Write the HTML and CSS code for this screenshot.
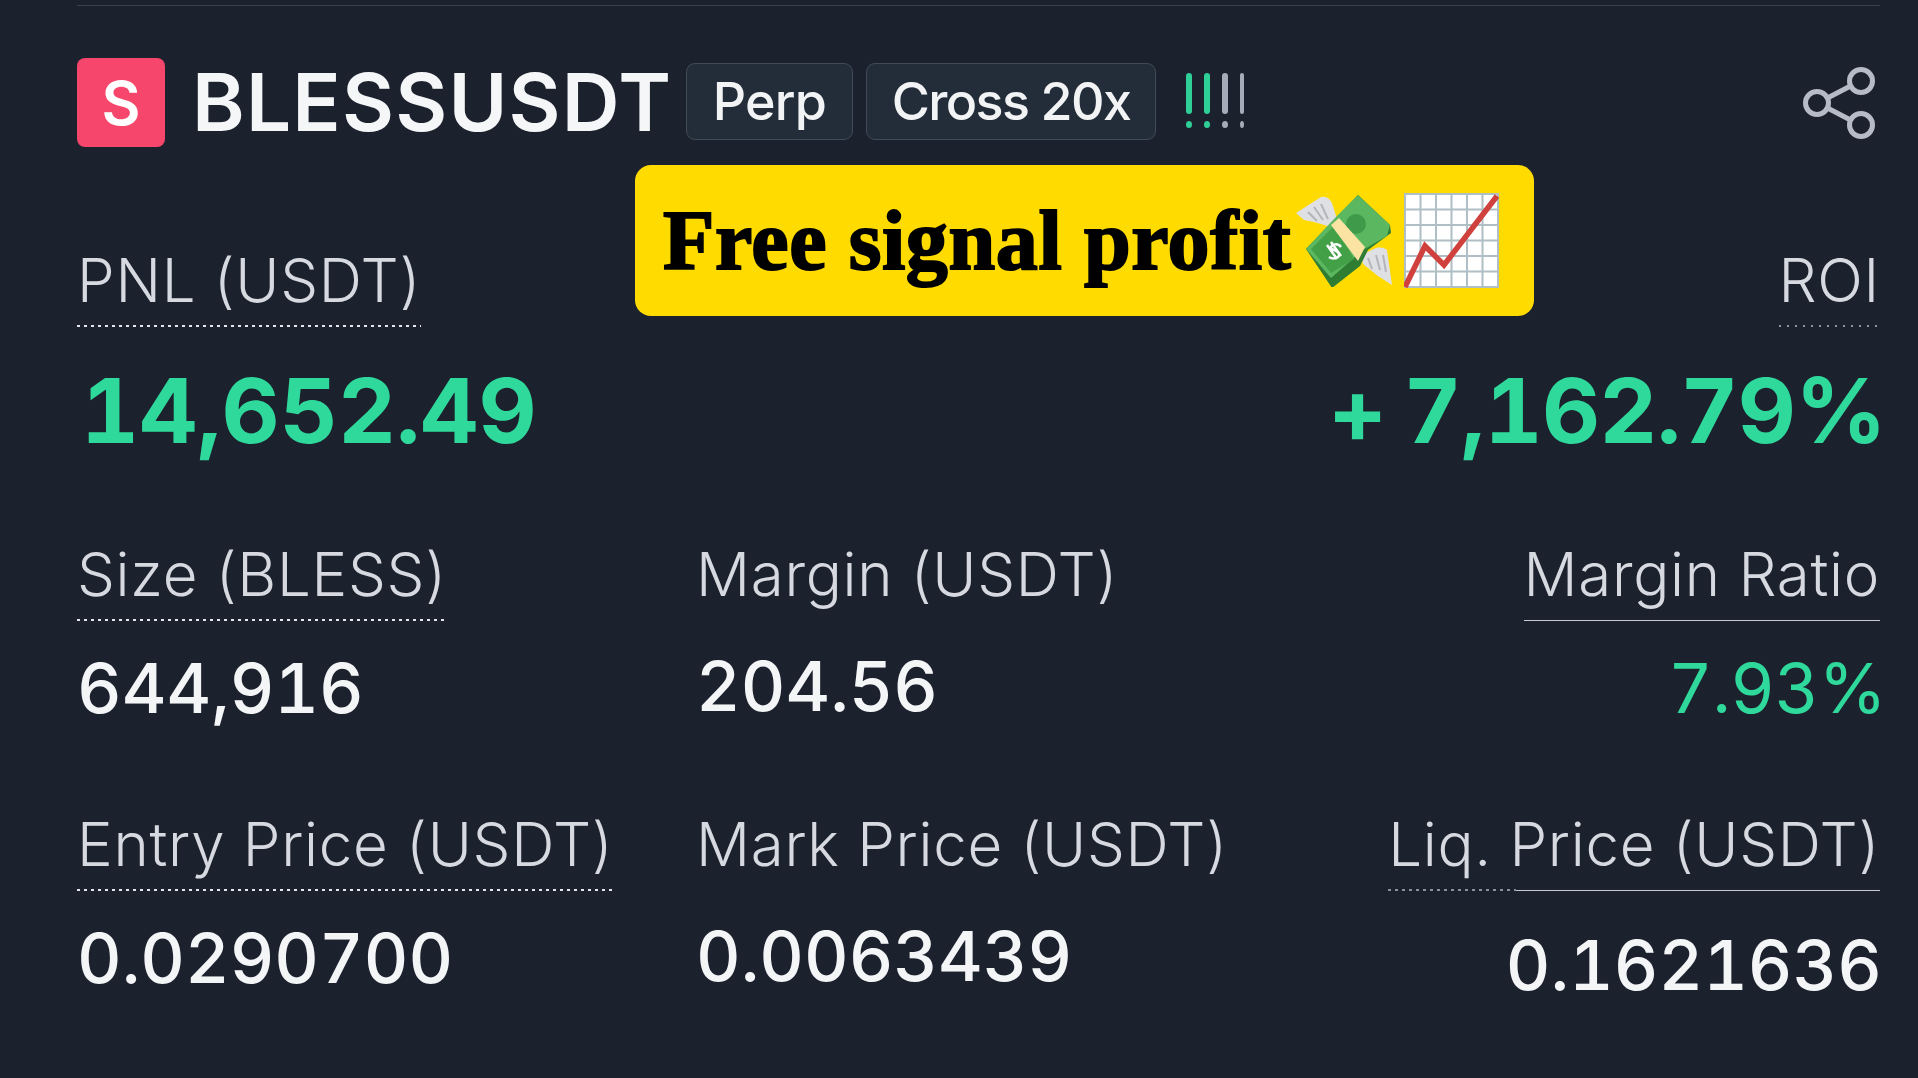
FILE: index.html
```html
<!DOCTYPE html>
<html lang="en">
<head>
<meta charset="utf-8">
<title>BLESSUSDT</title>
<link rel="stylesheet" href="styles.css">
</head>
<body>
<main class="card">
  <div class="topline"></div>
  <header class="head">
    <div class="logo">S</div>
    <h1 class="symbol">BLESSUSDT</h1>
    <span class="tag tag-perp">Perp</span>
    <span class="tag tag-cross">Cross 20x</span>
    <div class="risk">
      <i class="bar on"></i><i class="bar on"></i><i class="bar"></i><i class="bar thin"></i>
    </div>
    <svg class="share" viewBox="0 0 72 72" fill="none" stroke="#b6bbc7" stroke-width="5">
      <circle cx="58" cy="14" r="11.5"/>
      <circle cx="14" cy="36" r="11.5"/>
      <circle cx="58" cy="58" r="11.5"/>
      <path d="M24.500 31 47.500 19M24.500 41 47.500 53"/>
    </svg>
  </header>

  <section class="stats">
    <div class="stat s-top">
      <span class="label dots">PNL (USDT)</span>
      <div class="value big inset">14,652.49</div>
    </div>
    <div class="stat s-top empty"></div>
    <div class="stat s-top end">
      <span class="label tiny">ROI</span>
      <div class="value big pct">+ 7,162.79%</div>
    </div>

    <div class="stat">
      <span class="label dots">Size (BLESS)</span>
      <div class="value">644,916</div>
    </div>
    <div class="stat">
      <span class="label">Margin (USDT)</span>
      <div class="value up-2">204.56</div>
    </div>
    <div class="stat end">
      <span class="label solid">Margin Ratio</span>
      <div class="value green pct">7.93%</div>
    </div>

    <div class="stat">
      <span class="label dots">Entry Price (USDT)</span>
      <div class="value">0.0290700</div>
    </div>
    <div class="stat">
      <span class="label">Mark Price (USDT)</span>
      <div class="value up-2">0.0063439</div>
    </div>
    <div class="stat end">
      <span class="label mixed">Liq. Price (USDT)</span>
      <div class="value down-7">0.1621636</div>
    </div>
  </section>

  <aside class="banner">
    <span class="banner-text">Free signal profit</span>
    <svg class="emoji-money" viewBox="0 0 96 92">
      <path d="M0 18 25 2c5-1 9 2 11 6l5 16-6 8-17-5L8 25Z" fill="#dfe0e3"/>
      <path d="M12 17l9 9M18 12l9 13M25 9l7 15" stroke="#b3b5ba" stroke-width="2" fill="none"/>
      <path d="M65 60 80 53c5-1 9 0 11 2l5 35-14-9-15-12Z" fill="#dfe0e3"/>
      <path d="M72 63l4 11M80 60l4 15M87 60l3 17" stroke="#b3b5ba" stroke-width="2" fill="none"/>
      <path d="M10 54 36 93 64 71 72 55 95 38 94 30 62 0Z" fill="#2e7d32"/>
      <path d="M10 54 38 24 62 0 94 30 91 41 67 55 35 83Z" fill="#5cb860"/>
      <path d="M15 54 39 30 58 64 35 78Z" fill="#43a047"/>
      <circle cx="60" cy="29" r="10" fill="#3f9a4a"/>
      <path d="M35 30 43 23 69 52 62 66Z" fill="#fbe3a4"/>
      <path d="M45 52c-3-4-9-3-10 0s7 3 8 7-6 6-10 3M31 50l10 14M35 47l10 14" stroke="#fff" stroke-width="2.500" fill="none"/>
    </svg>
    <svg class="emoji-chart" viewBox="0 0 95 95">
      <rect x="1" y="1" width="93" height="93" fill="#fff" stroke="#b0bec5" stroke-width="2"/>
      <path d="M16.500 1V94M32 1V94M47.500 1V94M63 1V94M78.500 1V94M1 16.500H94M1 32H94M1 47.500H94M1 63H94M1 78.500H94" stroke="#b0bec5" stroke-width="2"/>
      <path d="M1 94 21 53 40 72 93 3" stroke="#d0403c" stroke-width="5.500" fill="none"/>
    </svg>
  </aside>
</main>
</body>
</html>
```

FILE: styles.css
```css
* { box-sizing: border-box; }
html, body { margin: 0; height: 100%; }
body {
  background: #1c212e;
  color: #fff;
  font-family: Inter, "Liberation Sans", sans-serif;
  overflow: hidden;
}
.card { position: relative; height: 1078px; padding: 5px 38px 0 77px; }
.topline { height: 1px; background: #3a404c; }

.head { display: flex; align-items: flex-start; margin-top: 51px; height: 90px; }
.logo {
  width: 88px; height: 89px; margin-top: 1px; flex: none;
  display: flex; align-items: center; justify-content: center;
  background: #f6466b; border-radius: 8px;
  font-size: 60px; font-weight: 600; line-height: 1;
}
.symbol {
  margin: 0 0 0 27px; font-size: 80px; font-weight: 600; line-height: 90px;
  letter-spacing: 1.2px; color: #f5f6f8; white-space: nowrap; width: 477px;
}
.tag {
  display: flex; align-items: center; justify-content: center;
  height: 77px; margin-top: 6px;
  background: #232c39; border: 1px solid #424a58; border-radius: 9px;
  font-size: 52px; font-weight: 500; color: #f2f3f5; white-space: nowrap; letter-spacing: -.8px;
}
.tag-perp { width: 167px; margin-left: 17px; }
.tag-cross { width: 290px; margin-left: 13px; letter-spacing: -1.6px; }
.risk { display: flex; margin: 16px 0 0 30px; gap: 12px; }
.bar {
  position: relative; display: block; width: 6px; height: 41px; border-radius: 3px;
  background: #a5abb8; margin-bottom: 14px;
}
.bar::after {
  content: ""; position: absolute; left: 0; bottom: -14px; width: 6px; height: 7px;
  border-radius: 50%; background: inherit;
}
.bar.on { background: #2fcf98; }
.bar.thin { width: 4px; }
.bar.thin::after { width: 4px; }
.share { width: 72px; height: 72px; margin: 10px 5px 0 auto; flex: none; }

.stats {
  display: grid; grid-template-columns: 619px 1fr auto;
  margin-top: 97px; row-gap: 80px;
}
.stat { display: flex; flex-direction: column; align-items: flex-start; }
.stat.end { align-items: flex-end; }
.label {
  font-size: 60px; font-weight: 300; line-height: 72px; height: 83px;
  padding-bottom: 11px; color: #d6d9e0; white-space: nowrap; letter-spacing: .7px;
}
.dots {
  background: repeating-linear-gradient(90deg, #e4e6eb 0 3px, transparent 3px 7px) left bottom / 100% 2px no-repeat;
}
.solid { background: linear-gradient(#c7cbd3, #c7cbd3) left bottom / 100% 1px no-repeat; }
.mixed {
  background:
    repeating-linear-gradient(90deg, #8a92a0 0 3px, transparent 3px 7px) left bottom / 26% 2px no-repeat,
    linear-gradient(#c7cbd3, #c7cbd3) right bottom / 74% 1px no-repeat;
}
.tiny {
  background: repeating-linear-gradient(90deg, #8d93a0 0 2px, transparent 2px 8px) left bottom / 100% 2px no-repeat;
}
.value {
  margin-top: 27px; font-size: 69px; font-weight: 500; line-height: 80px;
  color: #f4f5f7; white-space: nowrap; font-variant-numeric: tabular-nums;
}
.value.big {
  margin-top: 34px; height: 97px; font-size: 90px; font-weight: 700; line-height: 100px; color: #2fd89b;
}
.value.big.pct { letter-spacing: -.7px; word-spacing: -6px; }
.value.green { color: #2fd89b; font-weight: 400; letter-spacing: -.5px; }
.end .value { margin-right: -2px; }
.end .pct { margin-right: -6px; }
.inset { margin-left: 4px; }
.up-2 { margin-top: 25px; }
.down-7 { margin-top: 34px; }

.banner {
  position: absolute; left: 635px; top: 165px; width: 899px; height: 151px;
  display: flex; align-items: center; padding-left: 28px;
  background: #ffdb00; border-radius: 16px;
}
.banner-text {
  font-family: "Liberation Serif", serif; font-weight: 700; font-size: 84px;
  color: #000; white-space: nowrap; line-height: 1; letter-spacing: .6px;
  -webkit-text-stroke: 2px #000;
}
.emoji-money { width: 96px; height: 92px; flex: none; margin-left: 5px; }
.emoji-chart { width: 95px; height: 95px; flex: none; margin-left: 12px; }
```
